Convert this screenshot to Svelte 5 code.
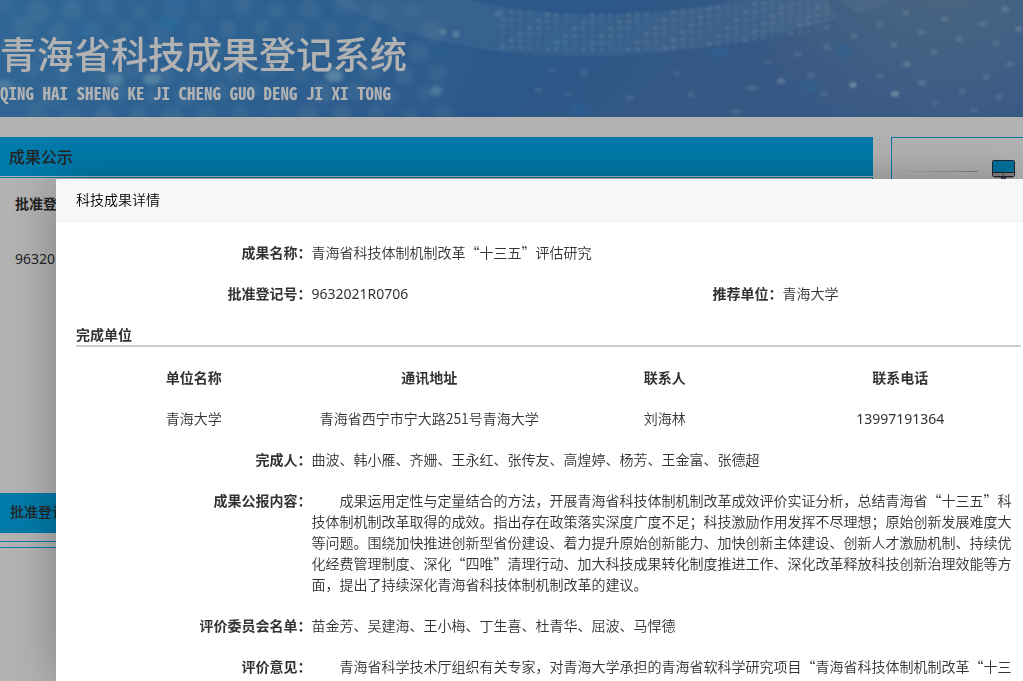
<script lang="ts">
  interface Unit {
    name: string;
    address: string;
    contact: string;
    phone: string;
  }

  const units: Unit[] = [
    { name: '青海大学', address: '青海省西宁市宁大路251号青海大学', contact: '刘海林', phone: '13997191364' }
  ];

  const people = '曲波、韩小雁、齐姗、王永红、张传友、高煌婷、杨芳、王金富、张德超';
  const committee = '苗金芳、吴建海、王小梅、丁生喜、杜青华、屈波、马悍德';
  const summary =
    '成果运用定性与定量结合的方法，开展青海省科技体制机制改革成效评价实证分析，总结青海省“十三五”科技体制机制改革取得的成效。指出存在政策落实深度广度不足；科技激励作用发挥不尽理想；原始创新发展难度大等问题。围绕加快推进创新型省份建设、着力提升原始创新能力、加快创新主体建设、创新人才激励机制、持续优化经费管理制度、深化“四唯”清理行动、加大科技成果转化制度推进工作、深化改革释放科技创新治理效能等方面，提出了持续深化青海省科技体制机制改革的建议。';
  const opinion = '青海省科学技术厅组织有关专家，对青海大学承担的青海省软科学研究项目“青海省科技体制机制改革“十三';

  // soft round lights on the left half of the banner
  const bubbles = Array.from({ length: 78 }, (_, i) => {
    const row = Math.floor(i / 13);
    const col = i % 13;
    return {
      x: col * 34 + (row % 2) * 17 + 4 + row * 3,
      y: row * 21 + 6 + ((col * 5) % 7),
      r: 8 + ((i * 7) % 4),
      o: 0.08 + ((i * 5) % 6) * 0.015
    };
  });

  // rows of small squares following the bright band
  const dots = Array.from({ length: 222 }, (_, i) => {
    const row = Math.floor(i / 37);
    const x = 500 + (i % 37) * 9;
    return { x, y: 13 + row * 7 - ((x - 590) * (x - 590)) / 2400, o: 0.05 + ((i * 7) % 9) * 0.022 };
  });

  const sparks = [
    [552, 70, 0.12], [584, 73, 0.2], [538, 90, 0.15], [568, 94, 0.1], [630, 98, 0.18], [691, 95, 0.18],
    [677, 74, 0.14], [736, 112, 0.25], [752, 88, 0.25], [781, 81, 0.35], [768, 62, 0.12], [798, 54, 0.16],
    [827, 47, 0.2], [811, 75, 0.2], [853, 85, 0.5], [880, 76, 0.15], [895, 94, 0.55], [907, 64, 0.35],
    [894, 45, 0.22], [922, 83, 0.28], [934, 52, 0.22], [921, 32, 0.24], [906, 13, 0.22], [945, 19, 0.24],
    [959, 39, 0.24], [983, 24, 0.24], [996, 43, 0.2], [1005, 9, 0.3], [1019, 29, 0.32], [986, 77, 0.2],
    [999, 97, 0.22], [974, 110, 0.18], [962, 91, 0.18], [1010, 64, 0.2], [935, 103, 0.15], [824, 94, 0.2],
    [854, 36, 0.2], [880, 25, 0.2], [443, 32, 0.3], [456, 34, 0.4], [498, 14, 0.25]
  ];
</script>

<div class="page">
  <header class="banner">
    <svg class="banner-art" viewBox="0 0 1023 117" preserveAspectRatio="xMidYMid slice" aria-hidden="true">
      <defs>
        <linearGradient id="sky" x1="0" y1="0" x2="1" y2="0.1">
          <stop offset="0" stop-color="#4592d6" />
          <stop offset="0.35" stop-color="#3f85cb" />
          <stop offset="0.55" stop-color="#3e7dc4" />
          <stop offset="0.8" stop-color="#507fbe" />
          <stop offset="1" stop-color="#4f7ec3" />
        </linearGradient>
        <radialGradient id="haze" gradientUnits="userSpaceOnUse" cx="950" cy="-60" r="220">
          <stop offset="0" stop-color="#84a8ad" stop-opacity="0.6" />
          <stop offset="1" stop-color="#84a8ad" stop-opacity="0" />
        </radialGradient>
        <filter id="soft"><feGaussianBlur stdDeviation="2" /></filter>
        <filter id="tiny"><feGaussianBlur stdDeviation="1.3" /></filter>
      </defs>
      <rect width="1023" height="117" fill="url(#sky)" />
      <rect width="1023" height="117" fill="url(#haze)" />
      <path d="M330 0C400 38 500 60 600 56C690 53 770 38 838 18L826 0H735C640 22 540 18 470 0Z" fill="#7fb0dd" opacity="0.26" filter="url(#tiny)" />
      <path d="M0 0H330C380 26 430 45 480 52L450 117H0Z" fill="#4fa0d8" opacity="0.12" filter="url(#soft)" />
      <path d="M842 0H893C880 8 866 13 856 12Z" fill="#a1c6e0" opacity="0.16" filter="url(#tiny)" />
      <g fill="#b2daf2" filter="url(#soft)">
        {#each bubbles as b}
          <circle cx={b.x} cy={b.y} r={b.r} opacity={b.o} />
        {/each}
      </g>
      <g fill="#a6e0fc" filter="url(#soft)">
        <ellipse cx="115" cy="79" rx="9" ry="6" opacity="0.5" />
        <ellipse cx="152" cy="79" rx="9" ry="6" opacity="0.55" />
        <ellipse cx="334" cy="76" rx="9" ry="6" opacity="0.6" />
        <ellipse cx="277" cy="50" rx="8" ry="6" opacity="0.35" />
        <ellipse cx="436" cy="91" rx="6" ry="5" opacity="0.5" />
        <ellipse cx="4" cy="85" rx="8" ry="6" opacity="0.4" />
      </g>
      <g fill="#389df0" filter="url(#soft)">
        <ellipse cx="170" cy="24" rx="12" ry="7" opacity="0.45" />
        <ellipse cx="84" cy="29" rx="12" ry="7" opacity="0.35" />
        <ellipse cx="178" cy="4" rx="10" ry="6" opacity="0.35" />
        <ellipse cx="720" cy="53" rx="9" ry="5" opacity="0.3" />
        <ellipse cx="844" cy="51" rx="9" ry="6" opacity="0.3" />
        <ellipse cx="809" cy="87" rx="9" ry="5" opacity="0.3" />
        <ellipse cx="579" cy="110" rx="9" ry="6" opacity="0.3" />
        <ellipse cx="558" cy="42" rx="10" ry="6" opacity="0.25" />
      </g>
      <g fill="#cdeaff" filter="url(#tiny)">
        {#each dots as d}
          <rect x={d.x} y={d.y} width="5" height="4" opacity={d.o} />
        {/each}
        {#each sparks as [x, y, o]}
          <ellipse cx={x} cy={y} rx="4" ry="3" opacity={o} />
        {/each}
      </g>
    </svg>
    <h1>青海省科技成果登记系统</h1>
    <p>QING HAI SHENG KE JI CHENG GUO DENG JI XI TONG</p>
  </header>

  <main class="columns">
    <section>
      <h2>成果公示</h2>
      <div class="notice">
        <table class="list">
          <thead>
            <tr><th>批准登</th></tr>
          </thead>
          <tbody>
            <tr><td class="latin">96320</td></tr>
          </tbody>
        </table>
        <h3>批准登记</h3>
      </div>
      <div class="next"></div>
    </section>
    <aside>
      <span class="fade"></span>
      <svg width="24" height="24" viewBox="0 0 24 24" aria-hidden="true">
        <rect x="1.5" y="1.5" width="22" height="16" rx="1" fill="#bcbcbc" stroke="#343446" />
        <rect x="2" y="2" width="21" height="11" fill="#00a5e2" />
        <path d="M2 13.5H23" stroke="#343446" />
        <circle cx="12.5" cy="15.5" r="0.8" fill="#343446" />
        <path d="M10 18H15V21H10Z" fill="#55556a" />
        <path d="M3 18H22" stroke="#343446" />
      </svg>
    </aside>
  </main>
</div>

<div class="shade"></div>

<div class="dialog" role="dialog" aria-labelledby="dialog-title">
  <div class="dialog-title" id="dialog-title">科技成果详情</div>
  <div class="dialog-body">
    <dl class="row">
      <dt>成果名称：</dt>
      <dd class="wide">青海省科技体制机制改革“十三五”评估研究</dd>
    </dl>
    <dl class="row">
      <dt>批准登记号：</dt>
      <dd class="latin">9632021R0706</dd>
      <dt>推荐单位：</dt>
      <dd>青海大学</dd>
    </dl>
    <h4>完成单位</h4>
    <table class="units">
      <thead>
        <tr>
          <th>单位名称</th>
          <th>通讯地址</th>
          <th>联系人</th>
          <th>联系电话</th>
        </tr>
      </thead>
      <tbody>
        {#each units as unit}
          <tr>
            <td>{unit.name}</td>
            <td>{unit.address}</td>
            <td>{unit.contact}</td>
            <td class="latin">{unit.phone}</td>
          </tr>
        {/each}
      </tbody>
    </table>
    <dl class="row">
      <dt>完成人：</dt>
      <dd class="wide">{people}</dd>
    </dl>
    <dl class="row">
      <dt>成果公报内容：</dt>
      <dd class="wide indent">{summary}</dd>
    </dl>
    <dl class="row">
      <dt>评价委员会名单：</dt>
      <dd class="wide">{committee}</dd>
    </dl>
    <dl class="row">
      <dt>评价意见：</dt>
      <dd class="wide indent">{opinion}</dd>
    </dl>
  </div>
</div>

<style>
  :global(body) {
    background: #fff;
    color: #333;
    font: 350 14px/21px 'Noto Sans CJK SC', sans-serif;
  }

  h1,
  h2,
  h3,
  h4,
  p,
  dl,
  dd {
    margin: 0;
  }

  .page {
    height: 100vh;
    overflow: hidden;
  }

  .latin {
    font-family: 'Noto Sans', 'Noto Sans CJK SC', sans-serif;
    font-weight: 400;
  }

  .banner {
    position: relative;
    height: 117px;
    overflow: hidden;
    color: #fff;
    white-space: nowrap;
  }

  .banner-art {
    position: absolute;
    inset: 0;
    width: 100%;
    height: 100%;
  }

  .banner h1 {
    position: relative;
    padding-top: 31px;
    font-size: 37px;
    font-weight: 500;
    line-height: 44px;
  }

  .banner p {
    position: relative;
    padding-top: 8px;
    font: bold 17px/20px 'Noto Sans Mono CJK SC', 'Liberation Mono', monospace;
  }

  .columns {
    display: grid;
    grid-template-columns: 1fr 132px;
    gap: 18px;
    padding-top: 20px;
  }

  h2 {
    padding-left: 9px;
    background: #00aff3;
    font-size: 16px;
    font-weight: 500;
    line-height: 39px;
  }

  .notice {
    margin-top: 1px;
    padding-bottom: 8px;
    border: solid #00aff3;
    border-width: 1px 1px 1px 0;
  }

  .list {
    width: 100%;
    height: 315px;
    border-spacing: 0;
    text-align: left;
  }

  .list th,
  .list td {
    height: 50px;
    padding: 0 15px;
  }

  .list td {
    height: auto;
    padding-top: 20px;
    vertical-align: top;
  }

  h3 {
    padding: 0 0 4px 10px;
    background: #00aff3;
    font-size: 14px;
    font-weight: 500;
    line-height: 36px;
  }

  .next {
    height: 200px;
    margin-top: 5px;
    border-top: 1px solid #00aff3;
  }

  aside {
    display: flex;
    align-items: flex-start;
    gap: 13px;
    padding: 21px 8px 0 3px;
    border: 1px solid #00aff3;
    border-right: 0;
  }

  .fade {
    flex: 1;
    height: 1px;
    margin-top: 12px;
    background: linear-gradient(90deg, transparent, #bbb);
  }

  .shade {
    position: fixed;
    inset: 0;
    background: rgba(0, 0, 0, 0.3);
  }

  .dialog {
    position: fixed;
    inset: 179px 0 0 56px;
    border-radius: 2px 0 0 0;
    background: #fff;
    box-shadow: 1px 1px 50px rgba(0, 0, 0, 0.3);
  }

  .dialog-title {
    padding: 0 0 2px 20px;
    border-bottom: 1px solid #eee;
    border-radius: 2px 0 0 0;
    background: #f8f8f8;
    color: #000;
    line-height: 40px;
  }

  .dialog-body {
    padding: 20px 2px 0 20px;
  }

  .row {
    display: grid;
    grid-template-columns: repeat(4, 1fr);
    margin-bottom: 20px;
    padding-right: 3px;
  }

  dt {
    font-weight: bold;
    text-align: right;
  }

  .wide {
    grid-column: span 3;
  }

  .indent {
    text-indent: 2em;
  }

  h4 {
    margin-bottom: 20px;
    border-bottom: 2px solid #ccc;
    font-size: 14px;
  }

  .units {
    width: 100%;
    margin-bottom: 20px;
    padding-right: 3px;
    border-spacing: 0;
    table-layout: fixed;
    text-align: center;
  }

  .units th,
  .units td {
    padding: 0;
  }

  .units th {
    padding-bottom: 20px;
  }
</style>
